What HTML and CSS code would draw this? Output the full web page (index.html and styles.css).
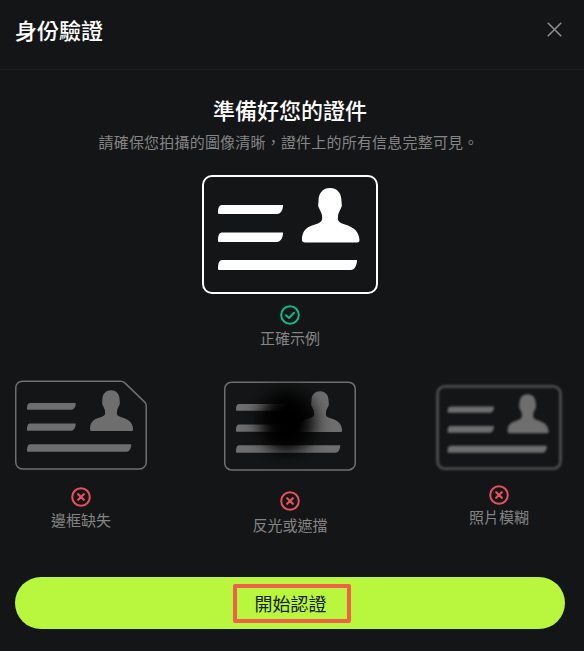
FILE: index.html
```html
<!DOCTYPE html>
<html lang="zh-Hant">
<head>
<meta charset="utf-8">
<title>身份驗證</title>
<link rel="stylesheet" href="styles.css">
</head>
<body>
<svg class="defs" width="0" height="0" aria-hidden="true">
  <defs>
    <symbol id="art" viewBox="0 0 176 119">
      <path d="M20 30H81C81 36 78 39 75 39H17C16 39 16 38 16 37C16 33 17 30 20 30Z"/>
      <path d="M20 57.500H81C81 63.500 78 67 75 67H17C16 67 16 66 16 65C16 61 17 57.500 20 57.500Z"/>
      <path d="M20 85H155C155 91 152 95 149 95H17C16 95 16 94 16 93C16 89 17 85 20 85Z"/>
      <path d="M128 13C120 13 116.500 19 116.500 26C116.500 29 115.500 31 117 33C118 36 120 38 120 41C120.500 45 120 46.500 116 48.500C108 51 100 53 100 65C100 66.500 101 67.500 103 67.500H155C157 67.500 157.500 66.500 157.500 65C157 54 148 51 140 48.500C136 46.500 135.500 45 136 41C136 38 138 36 139 33C140.500 31 139.500 29 139.500 26C139.500 19 136 13 128 13Z"/>
    </symbol>
    <symbol id="ok" viewBox="0 0 20 20">
      <circle cx="10" cy="10" r="8.800" fill="none" stroke="#14b981" stroke-width="2"/>
      <path d="M6 10.200L9 13L14 7.800" fill="none" stroke="#14b981" stroke-width="2" stroke-linecap="round" stroke-linejoin="round"/>
    </symbol>
    <symbol id="bad" viewBox="0 0 20 20">
      <circle cx="10" cy="10" r="8.800" fill="none" stroke="#e8505b" stroke-width="2"/>
      <path d="M7.200 7.200L12.800 12.800M12.800 7.200L7.200 12.800" fill="none" stroke="#e8505b" stroke-width="2.200" stroke-linecap="round"/>
    </symbol>
    <filter id="glare" x="-100%" y="-100%" width="300%" height="300%">
      <feGaussianBlur stdDeviation="13"/>
    </filter>
  </defs>
</svg>
<div class="modal">
  <header class="head">
    <h1 class="head-title">身份驗證</h1>
    <svg class="close" viewBox="0 0 14 14"><path d="M.7.700L13.300 13.300M13.300.700L.7 13.300"/></svg>
  </header>
  <main class="body">
    <h2 class="title">準備好您的證件</h2>
    <p class="sub">請確保您拍攝的圖像清晰&#65292;證件上的所有信息完整可見&#12290;</p>
    <svg class="card-main" viewBox="0 0 176 119">
      <rect x="1" y="1" width="174" height="117" rx="9" class="frame-white"/>
      <use href="#art" width="176" height="119" class="fill-white"/>
    </svg>
    <svg class="status status-main"><use href="#ok"/></svg>
    <div class="label label-main">正確示例</div>
    <div class="row">
      <section class="item item-a">
        <svg class="card-small" viewBox="0 0 176 119">
          <path d="M10 1H141C143 1 145 2 146 3L173 29C174.500 30.500 175 32 175 34V109C175 114 171 118 166 118H10C5 118 1 114 1 109V10C1 5 5 1 10 1Z" class="frame-gray"/>
          <use href="#art" width="176" height="119" class="fill-gray"/>
        </svg>
        <svg class="status"><use href="#bad"/></svg>
        <div class="label">邊框缺失</div>
      </section>
      <section class="item item-b">
        <svg class="card-small" viewBox="0 0 176 119">
          <rect x="1" y="1" width="174" height="117" rx="9" class="frame-gray"/>
          <use href="#art" width="176" height="119" class="fill-gray"/>
          <ellipse cx="84" cy="55" rx="36" ry="40" fill="#000" filter="url(#glare)"/>
          <ellipse cx="84" cy="52" rx="22" ry="30" fill="#000" filter="url(#glare)"/>
        </svg>
        <svg class="status"><use href="#bad"/></svg>
        <div class="label">反光或遮擋</div>
      </section>
      <section class="item item-c">
        <svg class="card-blur" viewBox="0 0 176 119">
          <rect x="2" y="2" width="172" height="115" rx="10" class="frame-dim"/>
          <use href="#art" width="176" height="119" class="fill-gray"/>
        </svg>
        <svg class="status"><use href="#bad"/></svg>
        <div class="label">照片模糊</div>
      </section>
    </div>
    <button class="cta" type="button"><span class="cta-text">開始認證</span></button>
  </main>
</div>
</body>
</html>
```
FILE: styles.css
```css
* { box-sizing: border-box; }
html, body { margin: 0; padding: 0; height: 100%; background: #141516; }
body { font-family: "Noto Sans CJK SC", "Noto Sans CJK TC", "Noto Sans", sans-serif; overflow: hidden; }
.defs { display: block; height: 0; }
.modal { width: 584px; height: 651px; background: #141516; display: flex; flex-direction: column; }
.head { height: 70px; flex: none; border-bottom: 1px solid #1e1f20; display: flex; align-items: center; justify-content: space-between; padding: 0 22px 10px 15px; }
.head-title { margin: 0 0 2px; font-size: 22px; line-height: 30px; font-weight: 500; color: #fff; }
.close { width: 15px; height: 15px; fill: none; stroke: #8b8b8b; stroke-width: 1.5; flex: none; }
.body { display: flex; flex-direction: column; align-items: center; flex: 1; padding-right: 4px; }
.title { margin: 24px 0 0; font-size: 22px; line-height: 30px; font-weight: 500; color: #fff; }
.sub { margin: 8px 3px 0 0; font-size: 15px; line-height: 20px; letter-spacing: .2px; color: #858585; }
.card-main { display: block; width: 176px; height: 119px; margin-top: 23px; }
.frame-white { fill: none; stroke: #fff; stroke-width: 2; }
.fill-white { fill: #fff; }
.frame-gray { fill: none; stroke: #6f6f6f; stroke-width: 2; }
.frame-dim { fill: none; stroke: #4c4c4c; stroke-width: 4; }
.fill-gray { fill: #6e6e6e; }
.status { display: block; width: 20px; height: 20px; flex: none; }
.status-main { margin-top: 11px; }
.label { font-size: 15px; line-height: 20px; color: #858585; white-space: nowrap; margin-top: 3px; }
.label-main { margin-top: 3px; }
.row { align-self: stretch; display: flex; align-items: flex-start; padding-left: 15px; }
.item { display: flex; flex-direction: column; align-items: center; }
.item-a { width: 132px; margin-top: 32px; }
.item-b { width: 132px; margin-top: 33px; margin-left: 77px; }
.item-c { width: 126px; margin-top: 37px; margin-left: 80px; }
.card-small { display: block; width: 132px; height: 90px; overflow: hidden; }
.card-blur { display: block; width: 126px; height: 85px; filter: blur(1.1px); }
.item-a .status { margin-top: 17px; }
.item-b .status { margin-top: 20px; }
.item-b .label { margin-top: 4px; }
.item-c .status { margin-top: 15px; }
.item-c .label { margin-top: 2px; }
.cta { display: flex; align-items: center; justify-content: center; width: 550px; height: 52px; margin-top: 42px; border: 0; border-radius: 26px; background: #b9f73e; padding: 0; font-family: inherit; }
.cta-text { display: flex; align-items: center; justify-content: center; width: 118px; height: 39px; margin-left: 4px; padding-right: 3px; border: 4px solid #f0614a; border-radius: 2px; font-size: 18px; color: #16210a; }
```
